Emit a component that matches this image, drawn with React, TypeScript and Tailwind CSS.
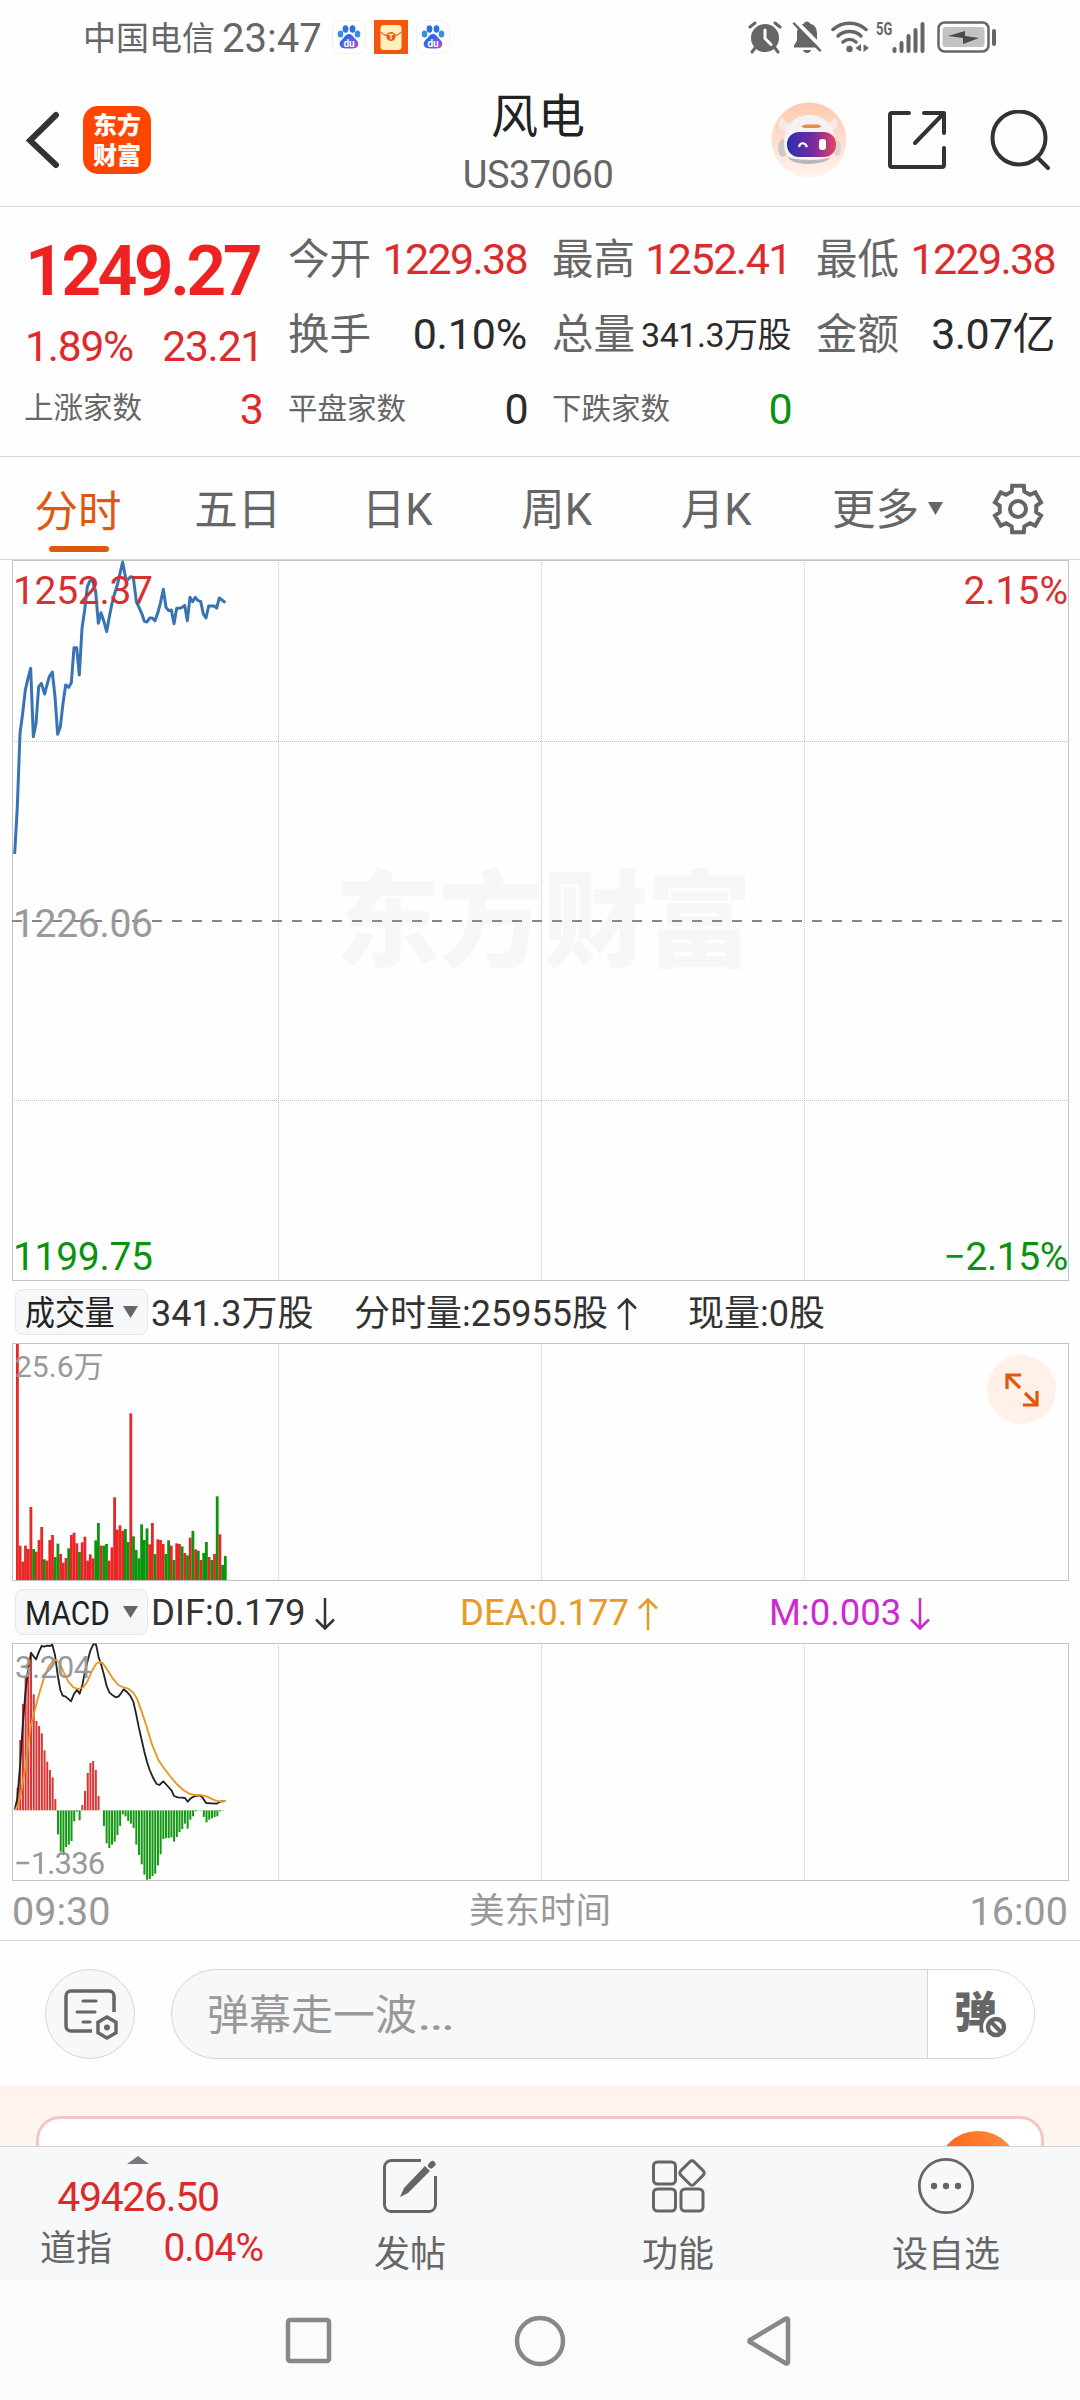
import type { ReactNode } from "react";

// price points, in thirds of a pixel
const pricePoints =
    "44,912 52,770 60,550 68,490 76,420 84,385 92,355 100,560 108,520 116,410 124,400 134,432 140,408 148,380 157,366 165,440 173,553 181,530 189,460 197,405 206,412 214,398 222,293 230,293 238,375 246,235 254,180 262,110 270,92 278,92 287,125 295,220 303,188 311,212 320,245 328,200 336,160 344,130 352,105 360,70 368,36 377,85 385,88 392,80 400,82 409,155 417,172 425,190 433,214 441,216 449,204 457,204 465,212 473,190 481,160 490,118 498,172 506,182 514,180 522,221 530,175 538,175 546,172 554,166 562,212 570,142 578,155 586,142 594,152 602,154 610,192 618,204 626,168 634,168 642,168 650,174 658,144 666,150 676,158";

const difPoints =
    "44,690 52,655 60,560 68,440 76,340 84,270 93,218 100,228 108,238 117,215 125,198 133,200 142,197 150,198 157,194 165,225 173,285 181,330 188,347 197,350 213,364 222,342 231,329 239,341 247,315 255,275 263,242 271,212 280,193 288,193 296,232 304,256 312,285 320,318 328,337 338,346 347,352 355,350 363,340 371,328 380,335 390,346 400,365 408,400 416,440 425,480 433,515 441,545 449,570 460,595 470,612 478,615 490,604 500,615 515,632 522,648 533,652 545,653 555,654 563,665 572,655 585,648 598,646 607,652 618,669 635,670 650,671 660,665 676,663";

const deaPoints =
    "44,690 52,680 60,655 68,610 76,560 84,500 92,440 102,400 115,350 130,300 145,262 158,244 168,240 178,248 190,275 205,305 220,322 235,327 250,322 262,305 275,275 288,252 298,246 308,249 320,266 338,295 355,315 370,322 385,326 400,338 412,358 425,395 440,440 455,490 475,540 490,562 510,588 530,612 550,630 570,642 585,645 600,645 620,649 640,659 655,664 676,663";

// positive = up minute, negative = down minute
const volumes = [
    708, 103, 55, 103, 93, 219, -93, 85, 120, 159, -62, 58, 120, 135, -69, -109,
    78, 52, 66, -95, 135, 142, 110, -84, 113, 130, 58, 77, 65, -119, -171, 103,
    -103, -108, 58, 98, 248, 151, 164, 148, -153, -114, 500, -131, -90, -65,
    -167, -120, -155, 107, 171, -78, 122, 120, 108, -78, -119, 103, -60, 110,
    108, -101, 81, -74, 127, -147, 92, -88, 60, -81, -114, 69, -60, 78, -251,
    137, -45, -72,
];

const macdBars = [
    0, 67, 211, 319, 403, 441, 466, 348, 268, 253, 231, 180, 146, 121, 99, 34,
    -72, -124, -134, -110, -103, -92, -33, -4, -30, 16, 58, 112, 142, 148, 121,
    43, 0, -47, -99, -113, -103, -94, -74, -47, -12, -18, -32, -40, -53, -103,
    -134, -162, -193, -208, -206, -197, -190, -165, -132, -86, -83, -83, -81,
    -94, -80, -65, -56, -40, -55, -28, -18, -3, -1, -1, -20, -36, -28, -24, -20,
    -18, -3, -1,
];

const quotes = [
    [
        { label: "今开", value: "1229.38", style: "text-[43px] tracking-[-1.700px] text-[#dd2b2b]" },
        { label: "换手", value: "0.10%", style: "text-[43px] tracking-[-0.200px] text-[#2b2b2b]" },
        { label: "平盘家数", value: "0", style: "text-[43px] tracking-[-1.700px] text-[#2b2b2b]", small: true },
    ],
    [
        { label: "最高", value: "1252.41", style: "text-[43px] tracking-[-1.500px] text-[#dd2b2b]" },
        { label: "总量", value: "341.3万股", style: "text-[34px] tracking-[-0.500px] text-[#2b2b2b]" },
        { label: "下跌家数", value: "0", style: "text-[43px] tracking-[-1.700px] text-[#0a9210]", small: true },
    ],
    [
        { label: "最低", value: "1229.38", style: "text-[43px] tracking-[-1.700px] text-[#dd2b2b]" },
        { label: "金额", value: "3.07亿", style: "text-[43px] tracking-[-0.600px] text-[#2b2b2b]" },
    ],
];

function Baidu() {
    return (
        <svg className="w-[34px] h-[34px]" viewBox="0 0 34 34">
            <defs>
                <linearGradient id="paw" x1="0" y1="0" x2="1" y2="1">
                    <stop offset="0.3" stopColor="#2b6be6" />
                    <stop offset="1" stopColor="#b04de0" />
                </linearGradient>
            </defs>
            <rect x="0.5" y="0.5" width="33" height="33" rx="8" fill="#fff" stroke="#f1f1f1" />
            <ellipse cx="8.5" cy="14" rx="2.8" ry="3.6" fill="#3b8be8" />
            <ellipse cx="13.5" cy="9" rx="2.9" ry="3.7" fill="#2f6fe0" />
            <ellipse cx="20.5" cy="9" rx="2.9" ry="3.7" fill="#2f6fe0" />
            <ellipse cx="25.5" cy="14" rx="2.8" ry="3.6" fill="#3b8be8" />
            <path
                d="M17 14c3 0 4 2.500 6 4.500 2.500 2.500 4 4 3 7-1 3-4 3-9 3s-8 0-9-3c-1-3 .5-4.500 3-7 2-2 3-4.500 6-4.500z"
                fill="url(#paw)"
            />
            <text x="17" y="26.500" textAnchor="middle" fontSize="10" fontWeight="700" fill="#fff" fontFamily="Roboto">
                du
            </text>
        </svg>
    );
}

function StatusBar() {
    return (
        <div className="h-[74px] flex items-center pl-[83px] pr-[83px] text-[#666]">
            <span className="text-[33px] leading-none pt-[3px]">中国电信</span>
            <span className="text-[40px] leading-none ml-[7px] pt-[3px]">23:47</span>
            <div className="flex items-center gap-2 ml-[10px]">
                <Baidu />
                <svg className="w-[34px] h-[34px]" viewBox="0 0 34 34">
                    <rect width="34" height="34" fill="#f4560d" />
                    <rect x="6.500" y="5" width="21" height="25" rx="3.500" fill="#fff0bd" />
                    <path d="M7 12c3 4 6 3.500 10 3.500s7 .5 10-3.500" fill="none" stroke="#e8591a" strokeWidth="1.200" />
                    <circle cx="17" cy="16.500" r="4.600" fill="#ee5a16" />
                    <path d="M14.500 14.500h5M17 14.500v5" stroke="#ffe9b0" strokeWidth="1.400" />
                </svg>
                <Baidu />
            </div>
            <div className="flex items-center ml-auto">
                <svg className="w-[34px] h-[34px]" viewBox="0 0 34 34">
                    <circle cx="17" cy="18" r="14" fill="#666" />
                    <path d="M2 7l5-4M32 7l-5-4M7 28l-3 4M27 28l3 4" stroke="#666" strokeWidth="3" strokeLinecap="round" />
                    <path d="M17 10v8.500l6 6" fill="none" stroke="#fff" strokeWidth="3" strokeLinecap="round" />
                </svg>
                <svg className="w-[30px] h-[34px] ml-[10px]" viewBox="0 0 30 34">
                    <path
                        d="M15 1.500c2 0 2.500 1 3 2 5 1.500 7 5 7 10v7l3.500 5v2H2v-2l3-5v-7c0-5 2-8.500 7-10 .5-1 1-2 3-2z"
                        fill="#666"
                    />
                    <path d="M11 30h8c-.5 2-2 3-4 3s-3.500-1-4-3z" fill="#666" />
                    <path d="M3.500 1l27 27" stroke="#fff" strokeWidth="4" />
                    <path d="M2 3.500l26 27" stroke="#666" strokeWidth="2.500" strokeLinecap="round" />
                </svg>
                <svg className="w-[38px] h-[34px] ml-[9px]" viewBox="0 0 38 34">
                    <g fill="none" stroke="#666" strokeWidth="3.500" strokeLinecap="round">
                        <path d="M2 9.500c9-8.500 24-8.500 33 0" />
                        <path d="M7 16c6-6 17-6 23 0" />
                        <path d="M12 22c4-3.500 9-3.500 13 0" />
                    </g>
                    <circle cx="18.500" cy="29" r="3.200" fill="#666" />
                    <path d="M30 24v7h-1.500l-4-3zM32.500 32v-7h1.500l4 3z" fill="#666" />
                </svg>
                <span className="self-start ml-[7px] text-[18px] leading-none font-bold origin-left scale-x-[0.720] -mr-[7px]">
                    5G
                </span>
                <svg className="w-[33px] h-[34px]" viewBox="0 0 33 34">
                    <path
                        d="M2.500 29v2M9.500 23v8M16.500 16v15M23.500 10v21M30.500 4v27"
                        stroke="#666"
                        strokeWidth="4"
                        strokeLinecap="round"
                    />
                </svg>
                <svg className="w-[60px] h-[34px] ml-[12px]" viewBox="0 0 60 34">
                    <rect x="1.500" y="2.500" width="50" height="29" rx="6" fill="none" stroke="#666" strokeWidth="2.500" />
                    <rect x="5.500" y="7" width="42" height="20" rx="3" fill="#c2c2c2" />
                    <path d="M11 16l17-5v5l14 2-16 6v-6z" fill="#4b4b4b" />
                    <rect x="55" y="9" width="4" height="17" rx="2" fill="#666" />
                </svg>
            </div>
        </div>
    );
}

function Header() {
    return (
        <header className="h-[133px] flex items-center justify-between pl-[26px] pr-[28px] border-b border-[#d6d6d6]">
            <div className="flex items-center w-[320px]">
                <svg className="w-[34px] h-[58px]" viewBox="0 0 34 58">
                    <path d="M30 4L4 29.500 30 54" fill="none" stroke="#333" strokeWidth="6" strokeLinecap="round" />
                </svg>
                <div className="w-[68px] h-[68px] ml-[23px] rounded-[15px] bg-[#ff4500] text-white text-[24px] leading-[30px] font-black text-center pt-[5px]">
                    东方
                    <br />
                    财富
                </div>
            </div>
            <div className="flex flex-col items-center pt-[5px] pr-[2px]">
                <h1 className="text-[47px] leading-[50px] text-[#222]">风电</h1>
                <p className="text-[38px] leading-none mt-[14px] text-[#666] tracking-[-0.500px]">US37060</p>
            </div>
            <div className="flex items-center justify-end w-[320px]">
                <svg className="w-[76px] h-[76px]" viewBox="0 0 76 76">
                    <defs>
                        <linearGradient id="halo" x1="0" y1="0" x2="0" y2="1">
                            <stop offset="0" stopColor="#ffc9b0" />
                            <stop offset="1" stopColor="#fff4ee" />
                        </linearGradient>
                        <linearGradient id="visor">
                            <stop offset="0" stopColor="#2a2fae" />
                            <stop offset="0.55" stopColor="#7a2a9e" />
                            <stop offset="1" stopColor="#e8455e" />
                        </linearGradient>
                    </defs>
                    <circle cx="38" cy="38" r="37.500" fill="url(#halo)" />
                    <path d="M12 15c-6 4-6 12 2 14l8-7c-5 0-9-2-10-7zM63 15c5 4 5 12-3 14l-7-7c5 0 9-2 10-7z" fill="#f4ebe8" />
                    <ellipse cx="12" cy="46" rx="5" ry="9" fill="#cfc8c8" />
                    <ellipse cx="66" cy="46" rx="4" ry="8" fill="#dcd4d4" />
                    <path d="M38 13c15 0 25 10 26 26 0 14-6 23-27 23S13 53 13 39c1-16 11-26 25-26z" fill="#f5f2f2" />
                    <path d="M15 54c5 6 12 8 22 8s19-2 23-7c-8 4-38 4-45-1z" fill="#bdb6bb" />
                    <path d="M30 24.500l4-2h13l4 2-4 1.500H33z" fill="#e0904c" />
                    <rect x="16" y="30" width="49" height="25" rx="12" fill="url(#visor)" />
                    <path d="M28 45c1-5 6-5 8 0" fill="none" stroke="#fff" strokeWidth="2.200" />
                    <rect x="48" y="37" width="7" height="11" rx="3" fill="#fff" />
                </svg>
                <svg className="w-[60px] h-[60px] ml-[40px]" viewBox="0 0 60 60">
                    <g fill="none" stroke="#333" strokeWidth="4" strokeLinecap="round" strokeLinejoin="round">
                        <path d="M22 3H5a2 2 0 00-2 2v50a2 2 0 002 2h50a2 2 0 002-2V38" />
                        <path d="M37 3h20v20M56 4L28 33" />
                    </g>
                </svg>
                <svg className="w-[62px] h-[62px] ml-[43px] mt-px" viewBox="0 0 62 62">
                    <circle cx="29" cy="28" r="26.500" fill="none" stroke="#333" strokeWidth="4" />
                    <path d="M47 47l11 11" stroke="#333" strokeWidth="4" strokeLinecap="round" />
                </svg>
            </div>
        </header>
    );
}

function Quote() {
    return (
        <section className="h-[250px] grid grid-cols-4 gap-x-[26px] px-[25px] pt-[15px] leading-none border-b border-[#d6d6d6]">
            <div>
                <div className="h-[98px] flex items-center text-[70px] font-semibold text-[#ef2222] tracking-[-3.700px] whitespace-nowrap">
                    1249.27
                </div>
                <div className="h-[52px] flex items-center justify-between text-[42.500px] text-[#dd2b2b] tracking-[-1.200px] pt-[3px]">
                    <span>1.89%</span>
                    <span>23.21</span>
                </div>
                <div className="h-[73px] flex items-center justify-between">
                    <span className="text-[29.500px] text-[#666] pt-px -ml-px">上涨家数</span>
                    <span className="text-[43px] text-[#dd2b2b] pt-[2px] -mr-px">3</span>
                </div>
            </div>
            {quotes.map((col, i) => (
                <div key={i}>
                    {col.map(({ label, value, style, small }: any) => (
                        <div key={label} className="h-[75px] flex items-center justify-between whitespace-nowrap">
                            <span
                                className={
                                    small
                                        ? "text-[29.500px] text-[#666] pt-px -ml-px"
                                        : "text-[41.500px] text-[#666] pt-px -ml-px"
                                }
                            >
                                {label}
                            </span>
                            <span className={style}>{value}</span>
                        </div>
                    ))}
                </div>
            ))}
        </section>
    );
}

function Gear() {
    const pts: string[] = [];
    for (let k = 0; k < 6; k++) {
        for (const [r, a] of [
            [18.5, -20],
            [24, -14],
            [24, 14],
            [18.5, 20],
        ]) {
            const t = ((k * 60 - 90 + a) * Math.PI) / 180;
            pts.push(`${(27 + r * Math.cos(t)).toFixed(2)},${(27 + r * Math.sin(t)).toFixed(2)}`);
        }
    }
    return (
        <svg className="w-[54px] h-[54px]" viewBox="0 0 54 54" fill="none" stroke="#666" strokeWidth="4">
            <polygon points={pts.join(" ")} />
            <circle cx="27" cy="27" r="8" />
        </svg>
    );
}

const tabs = ["五日", "日K", "周K", "月K"];

function Tabs() {
    return (
        <nav className="h-[103px] flex items-center text-[43.500px] leading-none text-[#666]">
            <div className="w-[158px] h-full flex flex-col items-center pt-[34px] text-[#e0580f]">
                <span className="-ml-[2px]">分时</span>
                <span className="w-[60px] h-[6px] mt-[11px] rounded-full bg-[#e0580f]" />
            </div>
            {tabs.map((t) => (
                <span key={t} className="w-[159.500px] text-center pt-[5px]">
                    {t}
                </span>
            ))}
            <span className="ml-[36px] pt-[5px]">更多</span>
            <svg className="w-[15px] h-[13px] ml-[9px]" viewBox="0 0 15 13">
                <path d="M0 0h15L7.500 13z" fill="#666" />
            </svg>
            <span className="ml-auto mr-[35px]">
                <Gear />
            </span>
        </nav>
    );
}

// frame with dotted quarter lines; the viewBox counts thirds of a pixel
function Grid({ height, rows, children }: { height: number; rows?: number[]; children?: ReactNode }) {
    const h = height * 3;
    return (
        <svg className="block w-[1057px]" height={height} viewBox={`0 0 3171 ${h}`}>
            <g stroke="#c4c4c4" strokeWidth="3" strokeDasharray="3 3" shapeRendering="crispEdges">
                {[799.5, 1588.5, 2377.5].map((x) => (
                    <path key={x} d={`M${x} 0V${h}`} />
                ))}
                {rows?.map((y) => (
                    <path key={y} d={`M0 ${y}H3171`} />
                ))}
            </g>
            <rect x="1.500" y="1.500" width="3168" height={h - 3} fill="none" stroke="#c4c4c4" strokeWidth="3" />
            {children}
        </svg>
    );
}

function PriceChart() {
    return (
        <div className="border-t border-[#d6d6d6] -mt-px">
            <div className="relative ml-[12px] w-[1057px] leading-none text-[39px]">
                <div className="absolute left-[323px] top-[310px] text-[105px] font-black text-[#f7f7f7] tracking-[-1px] whitespace-nowrap">
                    东方财富
                </div>
                <div className="relative">
                    <Grid height={721} rows={[544.5, 1621.5]}>
                        <path d="M0 1083H3171" stroke="#888" strokeWidth="6" strokeDasharray="30 30" />
                        <polyline
                            points={pricePoints}
                            transform="translate(-36 -30)"
                            fill="none"
                            stroke="#3873b3"
                            strokeWidth="9"
                            strokeLinejoin="round"
                        />
                    </Grid>
                </div>
                <span className="absolute left-[1px] top-[12px] text-[#d83030] tracking-[-0.300px]">1252.37</span>
                <span className="absolute left-[1px] top-[345px] text-[#999] tracking-[-0.300px]">1226.06</span>
                <span className="absolute left-[1px] top-[678px] text-[#0a9210] tracking-[-0.300px]">1199.75</span>
                <span className="absolute right-[1px] top-[12px] text-[#d83030]">2.15%</span>
                <span className="absolute right-[1px] top-[678px] text-[#0a9210] tracking-[-0.400px]">−2.15%</span>
            </div>
        </div>
    );
}

function Picker({ children }: { children: string }) {
    return (
        <div className="relative w-[133px] h-[46px] rounded-[8px] border border-[#e6e7ea] bg-[#f6f7f9] flex items-center justify-between pl-[9px] pr-[9px] text-[#222]">
            <span className="text-[34px] leading-none whitespace-nowrap w-[88px] pt-[2px]">
                <span className="inline-block origin-left scale-x-[0.880]">{children}</span>
            </span>
            <svg className="w-[15px] h-[12px]" viewBox="0 0 15 12">
                <path d="M0 0h15L7.500 12z" fill="#666" />
            </svg>
        </div>
    );
}

function Arrow({ down }: { down?: boolean }) {
    return (
        <svg className="inline-block w-[20px] h-[32px] ml-[9px] -mt-[4px]" viewBox="0 0 20 32">
            <path
                d={down ? "M10 0v30M1 21.500l9 9 9-9" : "M10 32V2M1 10.500l9-9 9 9"}
                fill="none"
                stroke="currentColor"
                strokeWidth="2.500"
            />
        </svg>
    );
}

function VolumePanel() {
    return (
        <>
            <div className="h-[62px] flex items-center pl-[15px] text-[36px] leading-none text-[#333] whitespace-nowrap">
                <Picker>成交量</Picker>
                <span className="ml-[3px] w-[203px] pt-[4px]">341.3万股</span>
                <span className="w-[334px] pt-[4px]">
                    分时量:25955股
                    <Arrow />
                </span>
                <span className="pt-[4px]">现量:0股</span>
            </div>
            <div className="relative ml-[12px] w-[1057px]">
                <Grid height={238}>
                    {volumes.map((v, i) => (
                        <rect
                            key={i}
                            x={12 + i * 8.1}
                            y={711 - Math.abs(v)}
                            width="8.400"
                            height={Math.abs(v)}
                            fill={v > 0 ? "#e82626" : "#0a960a"}
                        />
                    ))}
                </Grid>
                <span className="absolute left-[3px] top-[9px] text-[30px] leading-none text-[#999]">25.6万</span>
                <div className="absolute right-[13px] top-[12px] w-[69px] h-[69px] rounded-full bg-[#fff0e9] flex items-center justify-center">
                    <svg className="w-[34px] h-[34px]" viewBox="0 0 34 34" fill="none" stroke="#e0580f" strokeWidth="3.200">
                        <path d="M2 16V2h14M3 3l12 12M32 18v14H18M31 31L20 20" />
                    </svg>
                </div>
            </div>
        </>
    );
}

function MacdPanel() {
    return (
        <>
            <div className="h-[62px] flex items-center pl-[15px] text-[36.500px] leading-none text-[#333] whitespace-nowrap">
                <Picker>MACD</Picker>
                <span className="ml-[3px] w-[309px] pt-[3px]">
                    DIF:0.179
                    <Arrow down />
                </span>
                <span className="w-[309px] pt-[3px] text-[#e89a25]">
                    DEA:0.177
                    <Arrow />
                </span>
                <span className="pt-[3px] text-[#cb2bd0]">
                    M:0.003
                    <Arrow down />
                </span>
            </div>
            <div className="relative ml-[12px] w-[1057px]">
                <Grid height={238}>
                    <g transform="translate(-36 -189)">
                        {macdBars.map((v, i) => (
                            <rect
                                key={i}
                                x={41.5 + i * 8.1}
                                y={v > 0 ? 691 - v : 691}
                                width="6"
                                height={Math.abs(v)}
                                fill={v > 0 ? "#dd3434" : "#149814"}
                            />
                        ))}
                        <polyline points={difPoints} fill="none" stroke="#222" strokeWidth="5.500" strokeLinejoin="round" />
                        <polyline points={deaPoints} fill="none" stroke="#e8961f" strokeWidth="5.500" strokeLinejoin="round" />
                    </g>
                </Grid>
                <span className="absolute left-[3px] top-[9px] text-[31px] leading-none text-[#999] tracking-[-0.400px]">
                    3.204
                </span>
                <span className="absolute left-[2px] bottom-[2px] text-[31px] leading-none text-[#999] tracking-[-0.900px]">
                    −1.336
                </span>
            </div>
            <div className="h-[60px] flex items-center justify-between pl-[12px] pr-[12px] pt-[3px] text-[#999] leading-none border-b border-[#d6d6d6]">
                <span className="text-[39.500px]">09:30</span>
                <span className="text-[35.500px]">美东时间</span>
                <span className="text-[39.500px]">16:00</span>
            </div>
        </>
    );
}

function Comment() {
    return (
        <div className="h-[145px] flex items-center pl-[45px] pr-[45px] leading-none">
            <div className="w-[90px] h-[90px] rounded-full border border-[#d3d6da] bg-[#f6f8fa] flex items-center justify-center">
                <svg className="w-[56px] h-[52px] ml-[2px]" viewBox="0 0 56 52" fill="none" stroke="#666" strokeWidth="3.500">
                    <path d="M51 24V8a5 5 0 00-5-5H8a5 5 0 00-5 5v30a5 5 0 005 5h21" />
                    <path d="M20 13h13M14 24h18M20 34h7" strokeLinecap="round" strokeWidth="3" />
                    <path d="M44 29l9 5.300v10.500L44 50l-9-5.200V34.300z" />
                    <circle cx="44" cy="39.500" r="3" fill="#666" stroke="none" />
                </svg>
            </div>
            <div className="ml-[36px] w-[864px] h-[90px] flex rounded-full border border-[#d3d6da] bg-[#f6f8fa] overflow-hidden">
                <div className="flex-1 flex items-center pl-[35px] pt-[4px] text-[42px] text-[#999]">
                    弹幕走一波<span className="inline-block origin-left scale-x-[1.350]">…</span>
                </div>
                <div className="w-[107px] border-l border-[#d3d6da] bg-white flex items-center pl-[26px]">
                    <span className="relative text-[43px] font-black text-[#666]">
                        弹
                        <svg className="absolute left-[29px] top-[22px] w-[26px] h-[26px]" viewBox="0 0 26 26">
                            <circle cx="13" cy="13" r="13" fill="#fff" />
                            <circle cx="13" cy="13" r="8" fill="none" stroke="#666" strokeWidth="4.500" />
                            <path d="M7 7l12 12" stroke="#666" strokeWidth="4" />
                        </svg>
                    </span>
                </div>
            </div>
        </div>
    );
}

function BottomBar() {
    return (
        <div className="h-[135px] flex border-t border-[#d3d6da] bg-[#f6f8fa] text-[#666] leading-none">
            <div className="w-[276px] flex flex-col items-center">
                <svg className="w-[22px] h-[8px] mt-[9px]" viewBox="0 0 22 8">
                    <path d="M0 8L11 0l11 8z" fill="#77797c" />
                </svg>
                <span className="text-[41px] mt-[13px] text-[#dd2b2b] tracking-[-1.300px]">49426.50</span>
                <div className="w-full flex items-center justify-between pl-[40px] pr-[13px] mt-[11px]">
                    <span className="text-[36px]">道指</span>
                    <span className="text-[39px] text-[#dd2b2b] tracking-[-1px]">0.04%</span>
                </div>
            </div>
            <div className="w-[268px] flex flex-col items-center">
                <svg className="w-[56px] h-[56px] mt-[11px]" viewBox="0 0 56 56">
                    <path
                        d="M39 2.500H9A7 7 0 002.500 9v38A7 7 0 009 53.500h38a7 7 0 006.500-6.500V18"
                        fill="none"
                        stroke="#666"
                        strokeWidth="3"
                    />
                    <path d="M43 8l5 5-22 22-8 4 4-9z" fill="#666" />
                    <path d="M49 7.500l1.500-1.500" stroke="#666" strokeWidth="6" strokeLinecap="round" />
                </svg>
                <span className="text-[36px] mt-[23px]">发帖</span>
            </div>
            <div className="w-[268px] flex flex-col items-center">
                <svg className="w-[56px] h-[56px] mt-[11px]" viewBox="0 0 56 56" fill="none" stroke="#666" strokeWidth="3">
                    <rect x="3.500" y="4" width="22" height="22" rx="4" />
                    <rect x="3.500" y="31" width="22" height="22" rx="4" />
                    <rect x="31" y="31" width="22" height="22" rx="4" />
                    <rect x="32.500" y="5.500" width="19" height="19" rx="3" transform="rotate(45 42 15)" />
                </svg>
                <span className="text-[36px] mt-[23px]">功能</span>
            </div>
            <div className="w-[268px] flex flex-col items-center">
                <svg className="w-[58px] h-[58px] mt-[10px]" viewBox="0 0 58 58" fill="#666">
                    <circle cx="29" cy="29" r="26.700" fill="none" stroke="#666" strokeWidth="2.800" />
                    <circle cx="17" cy="29" r="3.200" />
                    <circle cx="29" cy="29" r="3.200" />
                    <circle cx="41" cy="29" r="3.200" />
                </svg>
                <span className="text-[36px] mt-[22px]">设自选</span>
            </div>
        </div>
    );
}

function SystemNav() {
    return (
        <div className="h-[119px] flex items-center justify-center gap-[179px] bg-[#fbfbfb]">
            <svg className="w-[52px] h-[52px]" viewBox="0 0 52 52" fill="none" stroke="#888" strokeWidth="4.500">
                <rect x="5" y="5" width="41" height="41" rx="2" />
            </svg>
            <svg className="w-[52px] h-[52px]" viewBox="0 0 52 52" fill="none" stroke="#888" strokeWidth="4.500">
                <circle cx="26" cy="26" r="23" />
            </svg>
            <svg className="w-[52px] h-[52px]" viewBox="0 0 52 52" fill="none" stroke="#888" strokeWidth="4.500">
                <path d="M43 4.500v43a1.500 1.500 0 01-2 1L6 27.500a1.500 1.500 0 010-3L41 3.500a1.500 1.500 0 012 1z" strokeLinejoin="round" />
            </svg>
        </div>
    );
}

export default function App() {
    return (
        <div className="w-[1080px] h-[2400px] overflow-hidden bg-[#fefefe] font-['Roboto','Noto_Sans_CJK_SC',sans-serif]">
            <StatusBar />
            <Header />
            <Quote />
            <Tabs />
            <PriceChart />
            <VolumePanel />
            <MacdPanel />
            <Comment />
            <div className="h-[60px] overflow-hidden px-[36px] pt-[30px] bg-linear-to-b from-[#fff1ee] to-[#fff6f0]">
                <div className="h-[80px] rounded-[24px] border-[3px] border-[#f4c8c0] bg-white pt-[12px] pl-[898px]">
                    <div className="w-[82px] h-[82px] rounded-full bg-linear-to-r from-[#ff6210] to-[#ff9040]" />
                </div>
            </div>
            <BottomBar />
            <SystemNav />
        </div>
    );
}
